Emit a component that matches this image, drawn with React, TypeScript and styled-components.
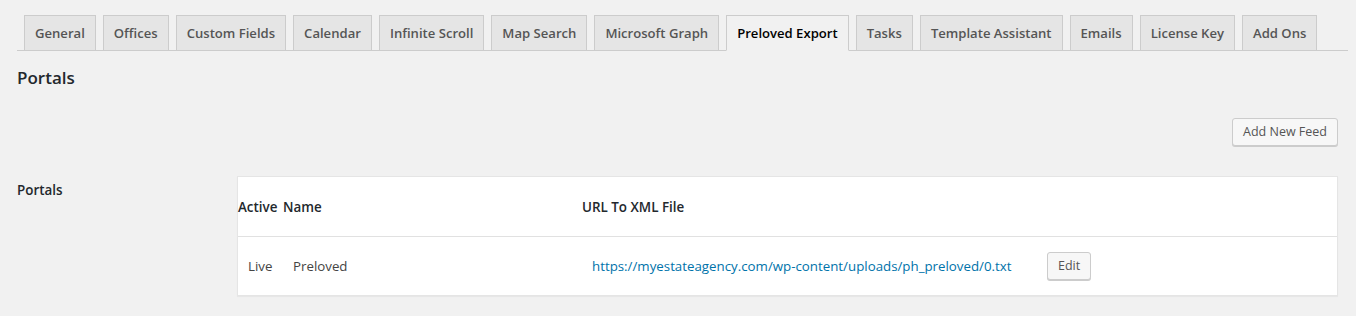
import styled, { createGlobalStyle } from "styled-components";

const GlobalStyle = createGlobalStyle`
    body {
        margin: 0;
        background: #f1f1f1;
        color: #444;
        font-family: "Segoe UI", "Open Sans", sans-serif;
        font-size: 13px;
    }
`;

const Wrap = styled.div`
    padding: 0 8px 0 17px;
`;

// 탭 바
const NavTabs = styled.nav`
    display: flex;
    padding-top: 15px;
    border-bottom: 1px solid #ccc;
`;

const Tab = styled.a<{ $active?: boolean }>`
    display: block;
    margin: 0 0 -1px 7px;
    padding: 5px 10px;
    border: 1px solid #ccc;
    border-bottom-color: ${(p) => (p.$active ? "#f1f1f1" : "#ccc")};
    background: ${(p) => (p.$active ? "#f1f1f1" : "#e5e5e5")};
    color: ${(p) => (p.$active ? "#000" : "#555")};
    font-size: 13.1px;
    font-weight: 600;
    line-height: 24px;
    white-space: nowrap;
    text-decoration: none;
`;

const Title = styled.h2`
    margin: 16px 0 0;
    font-size: 17px;
    line-height: 22px;
    font-weight: 600;
    color: #23282d;
`;

const Toolbar = styled.div`
    display: flex;
    justify-content: flex-end;
    margin-top: 29px;
    padding-right: 10px;
`;

const Button = styled.button`
    height: 28px;
    padding: 0 10px;
    border: 1px solid #ccc;
    border-radius: 3px;
    background: #f7f7f7;
    box-shadow: 0 1px 0 #ccc;
    color: #555;
    font-family: inherit;
    font-size: 12.5px;
    line-height: 26px;
    cursor: pointer;
`;

// 설정 폼 한 줄
const FormRow = styled.div`
    display: grid;
    grid-template-columns: 210px 1fr;
    margin-top: 15px;
`;

const Label = styled.div`
    padding: 20px 10px 20px 0;
    font-size: 13.4px;
    font-weight: 600;
    line-height: 18px;
    color: #23282d;
`;

const Field = styled.div`
    padding: 15px 10px;
`;

const FeedTable = styled.div`
    display: grid;
    grid-template-columns: 45px 299px 455px 1fr;
    background: #fff;
    border: 1px solid #e5e5e5;
    box-shadow: 0 1px 1px rgba(0, 0, 0, 0.04);
`;

const Head = styled.div`
    display: flex;
    align-items: center;
    height: 59px;
    border-bottom: 1px solid #e1e1e1;
    font-size: 13.4px;
    font-weight: 600;
    color: #23282d;
    white-space: nowrap;
`;

const Cell = styled.div`
    display: flex;
    align-items: center;
    height: 58px;
    padding: 0 10px;
    font-size: 13.3px;
    color: #444;
    white-space: nowrap;
`;

const Link = styled.a`
    color: #0073aa;
    text-decoration: none;
`;

const tabs = [
    "General",
    "Offices",
    "Custom Fields",
    "Calendar",
    "Infinite Scroll",
    "Map Search",
    "Microsoft Graph",
    "Preloved Export",
    "Tasks",
    "Template Assistant",
    "Emails",
    "License Key",
    "Add Ons",
];

const App = () => {
    return (
        <>
            <GlobalStyle />
            <Wrap>
                <NavTabs>
                    {tabs.map((t) => (
                        <Tab key={t} href="#" $active={t === "Preloved Export"}>
                            {t}
                        </Tab>
                    ))}
                </NavTabs>
                <Title>Portals</Title>
                <Toolbar>
                    <Button>Add New Feed</Button>
                </Toolbar>
                <FormRow>
                    <Label>Portals</Label>
                    <Field>
                        <FeedTable>
                            <Head>Active</Head>
                            <Head>Name</Head>
                            <Head>URL To XML File</Head>
                            <Head />
                            <Cell>Live</Cell>
                            <Cell>Preloved</Cell>
                            <Cell>
                                <Link href="#">
                                    https://myestateagency.com/wp-content/uploads/ph_preloved/0.txt
                                </Link>
                            </Cell>
                            <Cell>
                                <Button>Edit</Button>
                            </Cell>
                        </FeedTable>
                    </Field>
                </FormRow>
            </Wrap>
        </>
    );
};

export default App;
